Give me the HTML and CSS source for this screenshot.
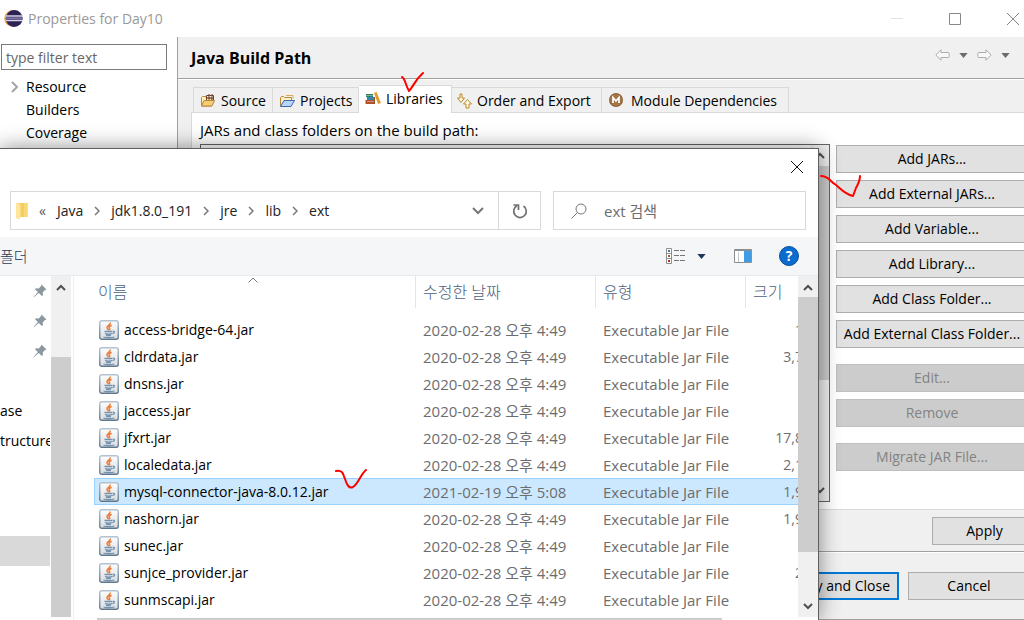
FILE: index.html
```html
<!DOCTYPE html>
<html lang="ko">
<head>
<meta charset="utf-8">
<title>Properties for Day10</title>
<link rel="stylesheet" href="styles.css">
</head>
<body>
<svg class="defs" aria-hidden="true">
  <defs>
    <linearGradient id="jar-face" x1="0" y1="0" x2="0" y2="1"><stop offset="0" stop-color="#fdfdfd"/><stop offset="1" stop-color="#d9dde0"/></linearGradient>
    <linearGradient id="jar-edge" x1="0" y1="0" x2="0" y2="1"><stop offset="0" stop-color="#b4c3d1"/><stop offset="1" stop-color="#5f778d"/></linearGradient>
    <symbol id="jar" viewBox="0 0 20 20">
      <rect x=".75" y=".75" width="18.5" height="18.5" rx="2" fill="url(#jar-face)" stroke="url(#jar-edge)" stroke-width="1.4"/>
      <path d="M11.2 2.6C12 5 7.600 5.600 8 7.800c.2 1 1.300 1.600 1.700 2.500M12.600 5.200c-2.200 1-3 1.900-2.200 3 .6.8.5 1.400-.3 2.100" fill="none" stroke="#ee7a34" stroke-width="1.500"/>
      <path d="M5.500 11.500h8M6 13.500c1 .8 6 .8 7 0M7 15.500h5M4.500 17c2 1 8 1 11 0M14 11.200c2.200-.2 2 2-.5 2.500" fill="none" stroke="#7390ad" stroke-width="1.300"/>
    </symbol>
    <symbol id="pin" viewBox="0 0 14 14"><path d="M8.500.5 13.500 5.500 12 6l-2.200 2.300.1 3.200-1.300.3L5.800 9 .8 13.300.500 13 4.900 8.100 2.200 5.400l.5-1.200 3.100.2L8 2z" fill="#8a979f"/></symbol>
    <symbol id="crumb" viewBox="0 0 6 10"><path d="m1 1 4 4-4 4" fill="none" stroke="#777" stroke-width="1.500"/></symbol>
    <symbol id="twist" viewBox="0 0 7 12"><path d="m1 1 5 5-5 5" fill="none" stroke="#a6a6a6" stroke-width="2"/></symbol>
    <symbol id="up" viewBox="0 0 10 7"><path d="m1 6 4-4 4 4" fill="none" stroke="#505050" stroke-width="2"/></symbol>
    <symbol id="down" viewBox="0 0 10 7"><path d="m1 1 4 4 4-4" fill="none" stroke="#505050" stroke-width="2"/></symbol>
    <symbol id="tri" viewBox="0 0 10 6"><path d="M0 0h10L5 6z"/></symbol>
  </defs>
</svg>

<div class="window">
  <header class="titlebar">
    <svg class="eclipse" viewBox="0 0 19 19"><circle cx="8.500" cy="9.500" r="8.300" fill="#f6a545"/><circle cx="10.200" cy="9.500" r="8.400" fill="#2c2255"/><path d="M2 7h17M2 11.500h17" stroke="#d8d5e6" stroke-width="1.500"/><path d="M2 9.300h17" stroke="#7d75a5" stroke-width="2"/></svg>
    <h1>Properties for Day10</h1>
    <div class="controls">
      <button aria-label="Minimize"><svg viewBox="0 0 12 12"><path d="M0 5.500h12" stroke="#e2e2e2"/></svg></button>
      <button aria-label="Maximize"><svg viewBox="0 0 12 12"><path d="M.5.5h11v11H.5z" fill="none" stroke="#888"/></svg></button>
      <button aria-label="Close"><svg viewBox="0 0 12 12"><path d="m0 0 12 12M12 0 0 12" stroke="#888"/></svg></button>
    </div>
  </header>

  <div class="body">
    <nav class="sidebar">
      <input class="filter" type="text" placeholder="type filter text" aria-label="Filter">
      <ul class="tree">
        <li><svg class="twist"><use href="#twist"/></svg>Resource</li>
        <li>Builders</li>
        <li>Coverage</li>
      </ul>
    </nav>

    <main class="page">
      <div class="pagehead">
        <h2>Java Build Path</h2>
        <div class="history">
          <button aria-label="Back"><svg class="arrow" viewBox="0 0 15 12"><path d="M.8 6 6 .8V3.500h7.200q1 0 1 1v3q0 1-1 1H6v2.700z" fill="#f8f8f8" stroke="#adadad"/></svg></button>
          <button aria-label="Back history"><svg class="tri"><use href="#tri"/></svg></button>
          <button aria-label="Forward"><svg class="arrow" viewBox="0 0 15 12"><path d="M14.200 6 9 .8V3.500H1.800q-1 0-1 1v3q0 1 1 1H9v2.700z" fill="#f8f8f8" stroke="#adadad"/></svg></button>
          <button aria-label="Forward history"><svg class="tri"><use href="#tri"/></svg></button>
        </div>
      </div>

      <div class="tabs" role="tablist">
        <button class="tab source" role="tab"><svg viewBox="0 0 16 16"><path d="M1.500 13V4.500l1-1h3l1 1.500h5V13z" fill="#fff0bd" stroke="#b8863c"/><path d="M6.500 2.500h7v5h-7zM6 5h8M9 1v6M12 1v6" fill="none" stroke="#70452c"/><path d="M1.500 13 4 7.500h10.500L12 13z" fill="#f7cd72" stroke="#b8863c"/></svg>Source</button>
        <button class="tab projects" role="tab"><svg viewBox="0 0 16 16"><path d="M1.500 13.500v-9l1-1h2l1 1h7V8" fill="#fff0bd" stroke="#b6883b"/><path d="M1.500 13.500 5 7.500h10.500L12 13.500z" fill="#b6d5f8" stroke="#3d67af"/><path d="M7 2.500h7v3" fill="none" stroke="#dba94f"/></svg>Projects</button>
        <button class="tab libraries active" role="tab"><svg viewBox="0 0 16 16"><path d="M1 3h7v3H1z" fill="#24856e"/><path d="M2 6h7v3H2z" fill="#3e82ac"/><path d="M.5 9h9v4h-9z" fill="#b6502c"/><path d="M1 4.500h7M2 10.500h7" stroke="#e4dbba" stroke-width=".5"/><path d="m9 2 2.500-1L16 12l-3 1z" fill="#e39b2f"/><path d="M9.500 6v7" stroke="#8b552b"/></svg>Libraries</button>
        <button class="tab order" role="tab"><svg viewBox="0 0 16 16"><path d="M4 1v4H1.500L5 9.500 8.500 5H6V1zM10 15v-4H7.500L11.500 6.500 15.500 11H13v4z" fill="#fff8dc" stroke="#bc8a2c"/></svg>Order and Export</button>
        <button class="tab modules" role="tab"><svg viewBox="0 0 16 16"><circle cx="8" cy="7" r="7" fill="#8c6239"/><circle cx="8" cy="7" r="6" fill="#a57446"/><path d="M5 10V4.500l3 3.500 3-3.500V10" fill="none" stroke="#fff" stroke-width="1.700"/></svg>Module Dependencies</button>
      </div>

      <section class="panel">
        <p class="caption">JARs and class folders on the build path:</p>
        <div class="columns">
          <div class="jarlist"><div class="listbar"><svg class="arr"><use href="#up"/></svg><div class="listthumb"></div><svg class="arr"><use href="#down"/></svg></div></div>
          <div class="actions">
            <button class="btn">Add JARs...</button>
            <button class="btn">Add External JARs...</button>
            <button class="btn">Add Variable...</button>
            <button class="btn">Add Library...</button>
            <button class="btn">Add Class Folder...</button>
            <button class="btn">Add External Class Folder...</button>
            <button class="btn group" disabled>Edit...</button>
            <button class="btn" disabled>Remove</button>
            <button class="btn group" disabled>Migrate JAR File...</button>
          </div>
        </div>
      </section>
      <div class="applyrow"><button class="btn apply">Apply</button></div>
      <footer class="footer"><button class="btn primary">Apply and Close</button><button class="btn cancel">Cancel</button></footer>
    </main>
  </div>
</div>

<div class="dialog" role="dialog" aria-label="ext">
  <div class="dialoghead"><button aria-label="닫기"><svg class="x" viewBox="0 0 12 12"><path d="m0 0 12 12M12 0 0 12" stroke="#111"/></svg></button></div>
  <div class="location">
    <div class="address">
      <svg class="folder" viewBox="0 0 12 18"><path d="M1 1h10.500v14H4z" fill="#f3cd62"/><path d="M0 1h1.500l3 1v13L3 17.500 0 16z" fill="#ffe59a"/><path d="M8 1h3.500v14H8z" fill="#f7d873"/></svg>
      <span class="more">«</span>
      <button>Java</button><svg class="crumb"><use href="#crumb"/></svg>
      <button>jdk1.8.0_191</button><svg class="crumb"><use href="#crumb"/></svg>
      <button>jre</button><svg class="crumb"><use href="#crumb"/></svg>
      <button>lib</button><svg class="crumb"><use href="#crumb"/></svg>
      <button>ext</button>
      <button class="drop" aria-label="이전 위치"><svg viewBox="0 0 12 8"><path d="m1 1 5 5 5-5" fill="none" stroke="#777" stroke-width="2"/></svg></button>
      <button class="refresh" aria-label="새로 고침"><svg viewBox="0 0 16 16"><path d="M11.500 3A6.300 6.300 0 1 1 5 2.700M1.500 2h5v5" fill="none" stroke="#707070" stroke-width="1.700"/></svg></button>
    </div>
    <label class="search"><svg viewBox="0 0 16 16"><circle cx="10" cy="6" r="5" fill="none" stroke="#777"/><path d="M6.500 9.500.5 15.500" stroke="#777"/></svg><input type="text" placeholder="ext 검색" aria-label="ext 검색"></label>
  </div>
  <div class="toolbar">
    <button class="newfolder">폴더</button>
    <button class="view" aria-label="보기"><svg viewBox="0 0 19 16"><path d="M.5.5h5v15h-5zM.5 5.500h5M.5 10.500h5" fill="#fff" stroke="#8f8f8f"/><path d="M8 2.500h5m1 0h5M8 7.500h5m1 0h5M8 12.500h5m1 0h5" stroke="#777"/><path d="M2 2h2v2H2z" fill="#3b78a8"/><path d="M2 7h2v2H2z" fill="#87654b"/><path d="M2 12h2v2H2z" fill="#c32918"/></svg></button>
    <button class="viewmenu" aria-label="보기 메뉴"><svg class="tri"><use href="#tri"/></svg></button>
    <button class="preview" aria-label="미리 보기 창"><svg viewBox="0 0 18 14"><path d="M.5.5h17v13H.5z" fill="#fff" stroke="#8b8f94"/><path d="M0 1.500h18" stroke="#8b8f94"/><path d="M4.500 3v10" stroke="#c6c6c6"/><path d="M10 2h7v11h-7z" fill="#429ce3"/></svg></button>
    <button class="help" aria-label="도움말">?</button>
  </div>
  <div class="browser">
    <ul class="places">
      <li><svg class="pin"><use href="#pin"/></svg></li>
      <li><svg class="pin"><use href="#pin"/></svg></li>
      <li><svg class="pin"><use href="#pin"/></svg></li>
      <li></li>
      <li>ase</li>
      <li>tructure</li>
      <li class="current"></li>
    </ul>
    <div class="scroll side"><svg class="arr"><use href="#up"/></svg><div class="thumb"></div></div>
    <div class="files">
      <svg class="sort" viewBox="0 0 10 6"><path d="m.5 5.500 4.500-4.500 4.500 4.500" fill="none" stroke="#777"/></svg>
      <table>
        <colgroup><col class="c-name"><col class="c-date"><col class="c-type"><col class="c-size"></colgroup>
        <thead><tr><th>이름</th><th>수정한 날짜</th><th>유형</th><th>크기</th></tr></thead>
        <tbody>
          <tr><td><svg><use href="#jar"/></svg>access-bridge-64.jar</td><td>2020-02-28 오후 4:49</td><td>Executable Jar File</td><td>1</td></tr>
          <tr><td><svg><use href="#jar"/></svg>cldrdata.jar</td><td>2020-02-28 오후 4:49</td><td>Executable Jar File</td><td>3,7</td></tr>
          <tr><td><svg><use href="#jar"/></svg>dnsns.jar</td><td>2020-02-28 오후 4:49</td><td>Executable Jar File</td><td></td></tr>
          <tr><td><svg><use href="#jar"/></svg>jaccess.jar</td><td>2020-02-28 오후 4:49</td><td>Executable Jar File</td><td></td></tr>
          <tr><td><svg><use href="#jar"/></svg>jfxrt.jar</td><td>2020-02-28 오후 4:49</td><td>Executable Jar File</td><td>17,8</td></tr>
          <tr><td><svg><use href="#jar"/></svg>localedata.jar</td><td>2020-02-28 오후 4:49</td><td>Executable Jar File</td><td>2,1</td></tr>
          <tr class="selected"><td><svg><use href="#jar"/></svg>mysql-connector-java-8.0.12.jar</td><td>2021-02-19 오후 5:08</td><td>Executable Jar File</td><td>1,9</td></tr>
          <tr><td><svg><use href="#jar"/></svg>nashorn.jar</td><td>2020-02-28 오후 4:49</td><td>Executable Jar File</td><td>1,9</td></tr>
          <tr><td><svg><use href="#jar"/></svg>sunec.jar</td><td>2020-02-28 오후 4:49</td><td>Executable Jar File</td><td></td></tr>
          <tr><td><svg><use href="#jar"/></svg>sunjce_provider.jar</td><td>2020-02-28 오후 4:49</td><td>Executable Jar File</td><td>2</td></tr>
          <tr><td><svg><use href="#jar"/></svg>sunmscapi.jar</td><td>2020-02-28 오후 4:49</td><td>Executable Jar File</td><td></td></tr>
        </tbody>
      </table>
      <div class="hscroll"></div>
    </div>
    <div class="scroll main"><svg class="arr"><use href="#up"/></svg><div class="thumb"></div><svg class="arr"><use href="#down"/></svg></div>
  </div>
</div>

<svg class="marks" viewBox="0 0 1024 620" aria-hidden="true"><path d="M402 77c3 1 3 7 7 14 4-4 6-11 14-18M821 176c8 0 8 5 15 9 6 5 9 9 17 11l3-8q4-7 4-12M336 471c7-1 7 3 9 8 2 6 4 10 8 8 6-4 7-12 13-17"/></svg>
</body>
</html>
```

FILE: styles.css
```css
* { box-sizing: border-box; }
html, body { height: 100%; }
body {
  margin: 0;
  position: relative;
  overflow: hidden;
  background: #fff;
  color: #000;
  font: 14px/20px "Open Sans", "Noto Sans CJK KR", sans-serif;
}
h1, h2, p, ul { margin: 0; padding: 0; font: inherit; }
ul { list-style: none; }
button, input { font: inherit; color: inherit; padding: 0; border: 0; background: none; border-radius: 0; }
svg { display: block; flex: none; }
.defs { position: absolute; width: 0; height: 0; }

.window { height: 100%; display: flex; flex-direction: column; overflow: hidden; }
.titlebar { height: 37px; flex: none; display: flex; align-items: center; gap: 5px; padding-left: 4px; color: #999; }
.titlebar h1 { flex: 1; }
.eclipse { width: 19px; height: 19px; }
.controls { display: flex; gap: 46px; padding-right: 5px; }
.controls svg, .x { width: 12px; height: 12px; }
.body { flex: 1; display: flex; min-height: 0; }

.sidebar { width: 178px; flex: none; border-right: 1px solid #a0a0a0; padding: 7px 10px 0 1px; }
.filter { display: block; width: 100%; height: 26px; border: 1px solid #7a7a7a; padding: 0 4px; }
.filter::placeholder { color: #666; opacity: 1; }
.tree { padding-top: 5px; }
.tree li { display: flex; align-items: center; height: 23px; padding-left: 25px; }
.twist { width: 7px; height: 12px; margin: 0 8px 0 -15px; }

.page { flex: 1; min-width: 0; display: flex; flex-direction: column; background: #f0f0f0; }
.pagehead { height: 42px; flex: none; display: flex; align-items: center; justify-content: space-between; padding: 1px 14px 0 13px; border-bottom: 1px solid #a0a0a0; box-shadow: 0 1px #fff; }
.pagehead h2 { font-weight: 700; font-size: 16px; }
.history { display: flex; align-items: center; gap: 9px; padding-bottom: 6px; }
.arrow { width: 15px; height: 12px; }
.tri { width: 9px; height: 5px; fill: #6b6b6b; }

.tabs { display: flex; align-items: flex-end; height: 33px; flex: none; padding-left: 15px; }
.tab { display: flex; align-items: center; gap: 5px; height: 25px; padding: 2px 0 0 6px; border: 1px solid #d9d9d9; border-width: 1px 1px 0 0; white-space: nowrap; }
.tab svg { width: 16px; height: 16px; }
.source { width: 80px; border-left-width: 1px; }
.projects { width: 86px; }
.libraries { width: 93px; }
.order { width: 150px; padding-left: 4px; }
.modules { width: 187px; gap: 7px; }
.tab.active { height: 28px; padding-bottom: 3px; margin-bottom: -1px; background: #fff; border-left-width: 0; z-index: 1; }

.panel { flex: 1; background: #fff; border: 1px solid #d9d9d9; border-right: 0; margin-left: 13px; padding: 7px 0 7px 8px; display: flex; flex-direction: column; }
.caption { padding-bottom: 4px; font-size: 15px; }
.columns { flex: 1; display: flex; gap: 6px; }
.jarlist { flex: 1; border: 1px solid #646464; display: flex; justify-content: flex-end; }
.listbar { width: 19px; background: #f0f0f0; display: flex; flex-direction: column; align-items: center; justify-content: space-between; padding: 7px 0; }
.listthumb { width: 100%; height: 214px; margin: 7px 0 auto; background: #cdcdcd; }
.actions { display: flex; flex-direction: column; gap: 7px; width: 192px; margin-right: -4px; padding-top: 1px; }
.btn { height: 28px; flex: none; border: 1px solid #adadad; background: #e1e1e1; white-space: nowrap; }
.btn:disabled { background: #ccc; border-color: #bfbfbf; color: #838383; }
.actions .group { margin-top: 9px; }
.applyrow { height: 42px; flex: none; display: flex; justify-content: flex-end; padding-top: 7px; border-bottom: 1px solid #a0a0a0; box-shadow: 0 1px #fff; }
.apply { width: 105px; margin-right: -13px; }
.footer { height: 68px; flex: none; display: flex; justify-content: flex-end; gap: 9px; padding-top: 20px; border-bottom: 1px solid #a0a0a0; }
.primary { width: 122px; border: 2px solid #0078d7; }
.cancel { width: 122px; margin-right: -6px; }

.dialog { position: absolute; z-index: 2; top: 148px; right: 205px; bottom: 0; left: 0; display: flex; flex-direction: column; overflow: hidden; background: #fff; border: 1px solid #5f5f5f; border-width: 1px 1px 0 0; box-shadow: 0 0 20px rgba(0, 0, 0, .45); }
.dialoghead { height: 42px; flex: none; display: flex; justify-content: flex-end; align-items: center; padding: 0 15px 6px 0; }
.location { display: flex; gap: 12px; padding: 0 12px 7px 10px; flex: none; }
.address { flex: 1; height: 39px; display: flex; align-items: center; gap: 11px; padding-left: 5px; border: 1px solid #d9d9d9; color: #222; }
.folder { width: 12px; height: 18px; }
.more { color: #555; }
.crumb { width: 6px; height: 10px; }
.drop { margin-left: auto; margin-right: 3px; }
.drop svg { width: 12px; height: 8px; }
.refresh { width: 42px; align-self: stretch; border-left: 1px solid #d9d9d9; display: flex; align-items: center; justify-content: center; }
.refresh svg { width: 16px; height: 16px; }
.search { width: 253px; height: 39px; border: 1px solid #d9d9d9; display: flex; align-items: center; gap: 17px; padding-left: 17px; font-size: 15px; }
.search svg { width: 16px; height: 16px; }
.search input { flex: 1; min-width: 0; }
.search input::placeholder { color: #6d6d6d; opacity: 1; }
.toolbar { height: 39px; flex: none; display: flex; align-items: center; background: #f5f6f7; border-bottom: 1px solid #e8e9ea; padding-right: 19px; }
.newfolder { margin-right: auto; color: #1e395b; font-size: 15px; font-weight: 300; }
.view svg { width: 19px; height: 16px; }
.viewmenu { margin: 0 28px 0 12px; }
.viewmenu .tri { fill: #1e395b; }
.preview svg { width: 18px; height: 14px; }
.help { width: 20px; height: 20px; margin-left: 27px; border: 1px solid #0b4f96; border-radius: 50%; background: #0a6cce; color: #fff; font-weight: 700; line-height: 16px; }

.browser { flex: 1; min-height: 0; display: flex; }
.places { width: 51px; flex: none; overflow: hidden; padding-right: 1px; }
.places li { height: 30px; display: flex; align-items: center; overflow: hidden; }
.pin { width: 14px; height: 14px; margin-left: 33px; }
.places .current { margin-top: 80px; background: #d9d9d9; }
.scroll { flex: none; width: 20px; display: flex; flex-direction: column; align-items: center; background: #f0f0f0; padding-top: 8px; margin-bottom: 3px; }
.arr { width: 10px; height: 7px; }
.scroll .thumb { width: 100%; background: #cdcdcd; }
.side .thumb { flex: 1; margin-top: 66px; }
.main .thumb { flex: 1; margin: 6px 0 51px; }
.main { padding-bottom: 7px; }
.files { flex: 1; min-width: 0; position: relative; overflow: hidden; margin-left: 2px; border-left: 1px solid #f0f0f0; padding-left: 20px; }
.sort { position: absolute; left: 174px; top: 1px; width: 10px; height: 6px; }
table { table-layout: fixed; width: 709px; border-collapse: separate; border-spacing: 0; }
.c-name { width: 322px; }
.c-date { width: 180px; }
.c-type { width: 150px; }
.c-size { width: 57px; }
th { height: 32px; padding: 0 0 0 7px; text-align: left; font-size: 16px; font-weight: 300; color: #4c607a; border-right: 1px solid #e5e5e5; white-space: nowrap; }
th:first-child { padding-left: 4px; }
tbody::before { content: ""; display: block; height: 8px; }
td { height: 27px; padding: 0 0 0 7px; color: #6d6d6d; font-size: 15px; white-space: nowrap; line-height: 20px; }
td:first-child { display: flex; align-items: center; gap: 5px; padding-left: 5px; color: #000; font-size: 14px; }
td:last-child { text-align: right; padding-right: 0; font-size: 14px; }
td svg { width: 20px; height: 20px; }
.selected td { background: #cce8ff; border: 1px solid #99d1ff; border-width: 1px 0; }
.selected td:first-child { border-left-width: 1px; padding-left: 4px; }
.hscroll { position: absolute; left: 23px; right: 76px; bottom: 0; height: 2px; background: #cdcdcd; }

.marks { position: absolute; z-index: 3; inset: 0; width: 100%; height: 100%; pointer-events: none; fill: none; stroke: #f00; stroke-width: 2; stroke-linecap: round; stroke-linejoin: round; }
```
